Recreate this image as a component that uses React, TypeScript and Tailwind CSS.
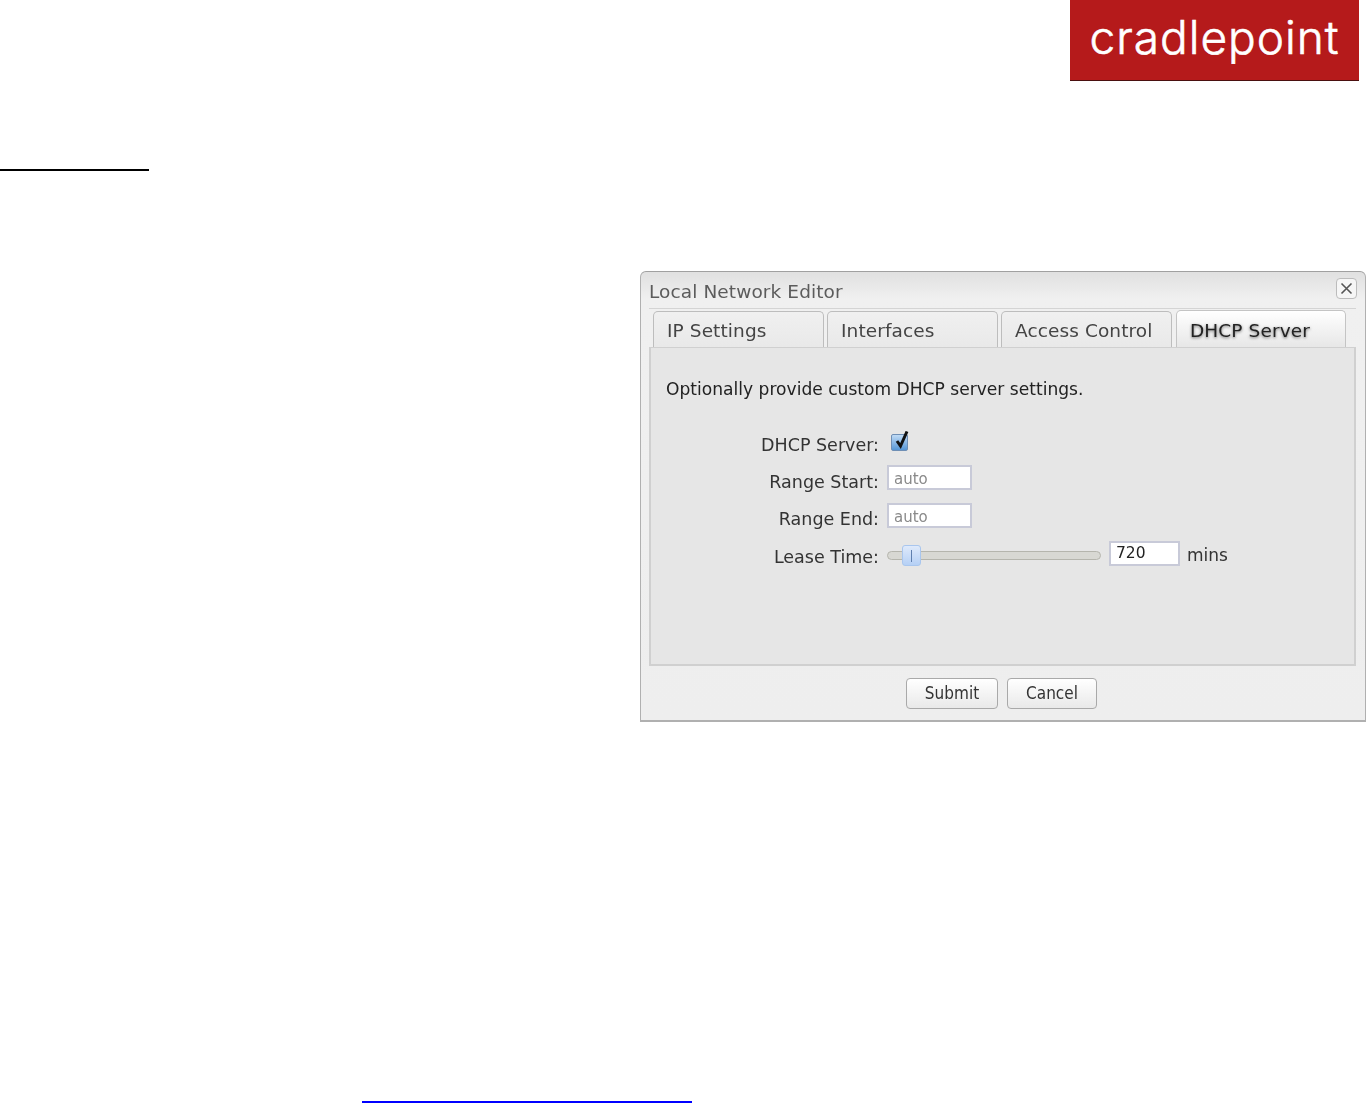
import React from "react";

const font = "font-['DejaVu_Sans','Liberation_Sans',sans-serif]";

function Tab({ label, width, active }: { label: string; width: string; active?: boolean }) {
  return (
    <div
      className={`${width} ${
        active
          ? "ml-[1px] h-[37px] border-[#c4c4c4] bg-gradient-to-b from-[#ffffff] to-[#e7e7e7] pt-[3px] text-[#222] [text-shadow:0_1px_3px_rgba(0,0,0,0.55)]"
          : "h-[36px] border-[#bdbdbd] bg-gradient-to-b from-[#f0f0f0] to-[#e9e9e9] pt-[2px] text-[#444]"
      } flex items-center rounded-t-[5px] border border-b-0 pl-[13px] text-[18.5px] tracking-[0.1px]`}
    >
      {label}
    </div>
  );
}

function Label({ children, offset }: { children: React.ReactNode; offset: string }) {
  return <div className={`${offset} w-[228px] text-right text-[17.5px] leading-[22px] text-[#333]`}>{children}</div>;
}

function Field({ value, width, dark }: { value: string; width: string; dark?: boolean }) {
  return (
    <div
      className={`${width} ${
        dark ? "text-[15.5px] text-[#222]" : "pt-[3px] text-[15px] text-[#8a8a8a]"
      } flex h-[25px] items-center border-2 border-[#c8cad8] bg-white pl-[5px]`}
    >
      {value}
    </div>
  );
}

export default function App() {
  return (
    <div className={`${font} h-[1104px] w-[1366px] overflow-hidden bg-white`}>
      <header className="flex justify-end pr-[7px]">
        <div className="flex h-[81px] w-[289px] items-center justify-center border-b border-[#4a1010] bg-[#b51a1b] pb-[6px]">
          <span className="font-['Inter',sans-serif] text-[46px] leading-none font-light tracking-[1px] text-white [-webkit-text-stroke:0.6px_white]">
            cradlepoint
          </span>
        </div>
      </header>

      <div className="mt-[88px] h-[2px] w-[149px] bg-black" />

      <section className="mt-[100px] ml-[640px] flex h-[451px] w-[726px] flex-col rounded-t-[6px] border border-b-2 border-[#b0b0b0] border-t-[#a0a0a0] bg-gradient-to-b from-[#e0e0e0] from-[0%] via-[#f0f0f0] via-[6%] to-[#eeeeee] blur-[0.5px]">
        <div className="flex h-[36px] shrink-0 items-center justify-between px-[8px] pt-[4px]">
          <span className="text-[18.5px] tracking-[0.1px] text-[#5c5c5c]">Local Network Editor</span>
          <span className="mb-[7px] flex h-[21px] w-[21px] items-center justify-center rounded-[4px] border border-[#bcbcbc] bg-[#f6f6f6]">
            <svg width="13" height="13" viewBox="0 0 13 13" fill="none" stroke="#555" strokeWidth="1.6">
              <path d="M1.5 1.5L11.5 11.5M11.5 1.5L1.5 11.5" />
            </svg>
          </span>
        </div>

        <div className="mr-[9px] ml-[8px] border-t border-[#d4d4d4]">
          <div className="flex h-[38px] items-end gap-[3px] pl-[4px]">
            <Tab label="IP Settings" width="w-[171px]" />
            <Tab label="Interfaces" width="w-[171px]" />
            <Tab label="Access Control" width="w-[171px]" />
            <Tab label="DHCP Server" width="w-[170px]" active />
          </div>
          <div className="h-[319px] border-2 border-t border-[#d0d0d0] bg-[#e6e6e6] pt-[29px] pl-[15px] text-[#222]">
            <p className="text-[17.1px] leading-[24px]">Optionally provide custom DHCP server settings.</p>
            <div className="mt-[28px] -ml-[15px] flex flex-col">
              <div className="flex h-[26px] items-center gap-[8px]">
                <Label offset="pt-[6px]">DHCP Server:</Label>
                <div className="relative mt-[1px] ml-[4px] h-[17px] w-[17px] rounded-[2px] border border-[#6f8fb5] bg-gradient-to-b from-[#c0dbf5] to-[#5596d6]">
                  <svg className="absolute -top-[4px] left-0" width="20" height="20" viewBox="0 0 20 20" fill="none" stroke="#111" strokeWidth="3">
                    <path d="M5 10L8.5 15L15 0.5" />
                  </svg>
                </div>
              </div>
              <div className="mt-[9px] flex h-[27px] items-center gap-[8px]">
                <Label offset="pt-[8px]">Range Start:</Label>
                <Field value="auto" width="w-[85px]" />
              </div>
              <div className="mt-[11px] flex h-[27px] items-center gap-[8px]">
                <Label offset="pt-[6px]">Range End:</Label>
                <Field value="auto" width="w-[85px]" />
              </div>
              <div className="mt-[11px] flex h-[27px] items-center gap-[8px]">
                <Label offset="pt-[6px]">Lease Time:</Label>
                <div className="relative mt-[4px] h-[9px] w-[214px] rounded-full border border-[#b5b5ad] bg-[#d8d8d3]">
                  <div className="absolute -top-[7px] left-[14px] flex h-[21px] w-[19px] items-center justify-center rounded-[3px] border border-[#a9c6ee] bg-gradient-to-b from-[#dfeafb] to-[#b5d0f5]">
                    <div className="h-[12px] w-[1px] bg-[#5f7fae]" />
                  </div>
                </div>
                <div className="flex items-center gap-[7px]">
                  <Field value="720" width="w-[71px]" dark />
                  <span className="pt-[4px] text-[17px] text-[#333]">mins</span>
                </div>
              </div>
            </div>
          </div>
        </div>

        <div className="flex flex-1 items-start justify-center gap-[9px] pt-[12px] pr-[3px]">
          <button className="h-[31px] w-[92px] rounded-[4px] border border-[#a9a9a9] bg-gradient-to-b from-white to-[#e9e9e9] font-['DejaVu_Sans_Condensed','DejaVu_Sans',sans-serif] text-[17px] text-[#333]">
            Submit
          </button>
          <button className="h-[31px] w-[90px] rounded-[4px] border border-[#a9a9a9] bg-gradient-to-b from-white to-[#e9e9e9] font-['DejaVu_Sans_Condensed','DejaVu_Sans',sans-serif] text-[17px] text-[#333]">
            Cancel
          </button>
        </div>
      </section>

      <div className="mt-[379px] ml-[362px] h-[2px] w-[330px] bg-[#0000ff]" />
    </div>
  );
}
